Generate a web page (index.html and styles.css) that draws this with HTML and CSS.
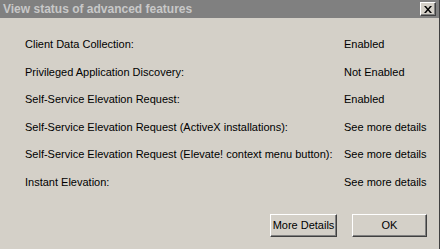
FILE: index.html
```html
<!DOCTYPE HTML>
<html lang="en">

<head>
  <meta charset="UTF-8">
  <title>View status of advanced features</title>
  <link rel="stylesheet" href="styles.css">
</head>

<body>
  <div class="dialog">
    <div class="titlebar">
      <span class="title">View status of advanced features</span>
      <button class="close" aria-label="Close">
        <svg width="8" height="7" viewBox="0 0 8 7">
          <path d="M0 0h2l2 2.5L6 0h2L5 3.5 8 7H6L4 4.5 2 7H0l3-3.5z" fill="#000"/>
        </svg>
      </button>
    </div>

    <div class="features">
      <span>Client Data Collection:</span><span>Enabled</span>
      <span>Privileged Application Discovery:</span><span>Not Enabled</span>
      <span>Self-Service Elevation Request:</span><span>Enabled</span>
      <span>Self-Service Elevation Request (ActiveX installations):</span><span>See more details</span>
      <span>Self-Service Elevation Request (Elevate! context menu button):</span><span>See more details</span>
      <span>Instant Elevation:</span><span>See more details</span>
    </div>

    <div class="actions">
      <button class="btn btn-more">More Details</button>
      <button class="btn btn-ok">OK</button>
    </div>
  </div>
</body>

</html>
```

FILE: styles.css
```css
* {
  box-sizing: border-box;
}

body {
  margin: 0;
  background-color: #d4d0c8;
  font-family: "Liberation Sans", Tahoma, sans-serif;
  font-size: 11px;
  color: #000;
}

.dialog {
  width: 440px;
  height: 249px;
  border-right: 1px solid #404040;
  background-color: #d4d0c8;
}

.titlebar {
  height: 18px;
  background-color: #808080;
  display: flex;
  align-items: center;
  justify-content: space-between;
  padding: 0 3px 0 3px;
}

.title {
  color: #c8c8c8;
  font-weight: bold;
  font-size: 12px;
  white-space: nowrap;
}

.close {
  width: 16px;
  height: 14px;
  padding: 0;
  margin: 0;
  display: flex;
  align-items: center;
  justify-content: center;
  background-color: #d4d0c8;
  border: 1px solid;
  border-color: #fff #404040 #404040 #fff;
  box-shadow: inset -1px -1px 0 #808080;
}

.features {
  display: grid;
  grid-template-columns: 319px auto;
  row-gap: 13.6px;
  line-height: 14px;
  padding: 19px 0 0 25px;
  white-space: nowrap;
}

.actions {
  display: flex;
  justify-content: flex-end;
  gap: 15px;
  padding: 25px 12px 0 0;
}

.btn {
  height: 23px;
  padding: 0;
  font-family: inherit;
  font-size: 11px;
  color: #000;
  white-space: nowrap;
  background-color: #d4d0c8;
  border: 1px solid;
  border-color: #fff #404040 #404040 #fff;
  box-shadow: inset -1px -1px 0 #808080;
}

.btn-more {
  width: 67px;
}

.btn-ok {
  width: 75px;
}
```
